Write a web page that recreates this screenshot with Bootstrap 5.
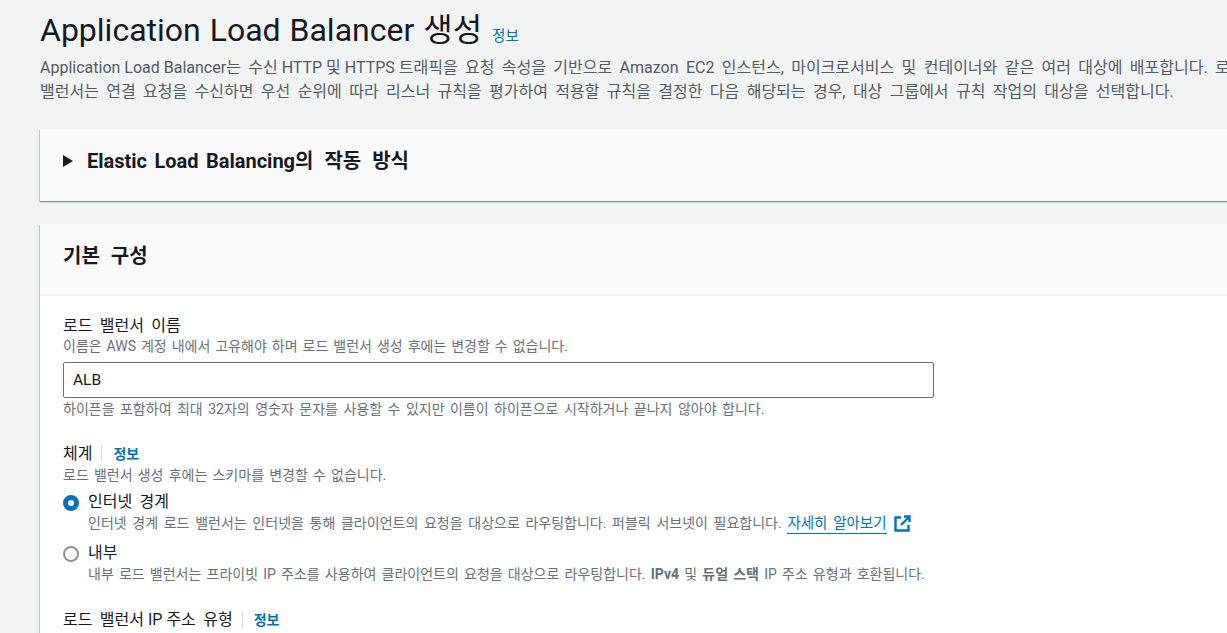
<!DOCTYPE html>
<html lang="ko">
<head>
  <meta charset="UTF-8">
  <meta name="viewport" content="width=device-width, initial-scale=1.0">
  <title>Application Load Balancer 생성</title>
  <link href="https://cdn.jsdelivr.net/npm/bootstrap@5.3.0/dist/css/bootstrap.min.css" rel="stylesheet">
  <style>
    html, body { height: 633px; overflow: hidden; }
    body {
      background: #f2f3f3;
      color: #16191f;
      font-family: Roboto, "Noto Sans CJK KR", sans-serif;
      font-size: 16px;
      line-height: 24px;
      word-spacing: 3.4px;
    }
    a { color: #0073bb; text-decoration: none; }
    .page-wrap { width: 1400px; padding: 12px 0 0 40px; }
    .page-title { font-size: 32px; line-height: 36px; font-weight: 400; margin: 0; word-spacing: 1px; }
    .title-info { font-size: 14.5px; font-weight: 400; margin-left: 1px; }
    .page-desc { color: #545b64; line-height: 24px; margin: 1px 0 0; }
    .plain-run { word-spacing: 0; }
    .heading-latin { word-spacing: 2.5px; }
    .aws-card { border: 0; border-radius: 0; box-shadow: 0 1px 1px 0 rgba(0,28,36,.3), 1px 1px 1px 0 rgba(0,28,36,.15), -1px 1px 1px 0 rgba(0,28,36,.15); }
    .aws-card .card-header { background: #fafafa; border-bottom: 0; border-radius: 0; padding: 0 23px 8px; }
    .help-card { margin-top: 25px; }
    .help-card .card-header { height: 72px; }
    .config-card { margin-top: 23px; }
    .config-card .card-header { height: 72px; border-bottom: 1px solid #eaeded; }
    .config-card .card-body { padding: 18px 23px; }
    .card-heading { font-size: 20px; font-weight: 700; line-height: 28px; margin: 0; word-spacing: 6px; }
    .caret-right { width: 0; height: 0; border-left: 10px solid #16191f; border-top: 6px solid transparent; border-bottom: 6px solid transparent; margin-right: 14px; }
    .field-label { line-height: 24px; }
    .field-hint { color: #687078; font-size: 14px; line-height: 20px; word-spacing: 1.7px; }
    .name-hint { margin-top: -2px; word-spacing: 1.5px; }
    .wide-hint { word-spacing: 2px; }
    .link-hint { word-spacing: 2.2px; }
    .info-sep { border-left: 1px solid #d5dbdb; margin-left: 9px; padding-left: 11px; font-size: 14px; font-weight: 700; word-spacing: 0; }
    .name-input { width: 871px; height: 36px; border: 1px solid #687078; border-radius: 2px; padding: 4px 9px; font-size: 15.5px; color: #16191f; margin: 6px 0 1px; }
    .scheme-block { margin-top: 23px; }
    .scheme-hint { margin-top: -1px; }
    .radio-row { display: flex; margin-top: 6px; }
    .radio-row + .radio-row { margin-top: 8px; }
    .radio-row .field-label { line-height: 22px; }
    .radio-row .form-check-input { width: 16px; height: 16px; margin: 4px 9px 0 0; flex: none; border: 2px solid #879596; background-color: #fff; }
    .radio-row .form-check-input:checked { background-color: #fff; border: 5px solid #0073bb; background-image: none; }
    .learn-more { border-bottom: 1px solid #0073bb; padding-bottom: 1px; font-size: 14.5px; }
    .ext-icon { width: 17px; height: 17px; margin-left: 2px; vertical-align: -4px; }
    .ip-block { margin-top: 24px; }
  </style>
</head>
<body>
<div class="page-wrap">
  <h1 class="page-title">Application Load Balancer 생성 <a class="title-info" href="#">정보</a></h1>
  <p class="page-desc"><span class="plain-run">Application Load Balancer</span>는 수신<span class="plain-run"> HTTP 및 HTTPS </span>트래픽을 요청 속성을 기반으로 Amazon EC2 인스턴스, 마이크로서비스 및 컨테이너와 같은 여러 대상에 배포합니다. 로드<br>밸런서는 연결 요청을 수신하면 우선 순위에 따라 리스너 규칙을 평가하여 적용할 규칙을 결정한 다음 해당되는 경우, 대상 그룹에서 규칙 작업의 대상을 선택합니다.</p>

  <div class="card aws-card help-card">
    <div class="card-header d-flex align-items-center">
      <span class="caret-right"></span>
      <h2 class="card-heading"><span class="heading-latin">Elastic Load Balancing</span>의 작동 방식</h2>
    </div>
  </div>

  <div class="card aws-card config-card">
    <div class="card-header d-flex align-items-center">
      <h2 class="card-heading">기본 구성</h2>
    </div>
    <div class="card-body">
      <label class="field-label d-block" for="lbName">로드 밸런서 이름</label>
      <div class="field-hint name-hint">이름은 AWS 계정 내에서 고유해야 하며 로드 밸런서 생성 후에는 변경할 수 없습니다.</div>
      <input class="form-control name-input" id="lbName" type="text" value="ALB">
      <div class="field-hint wide-hint">하이픈을 포함하여 최대 32자의 영숫자 문자를 사용할 수 있지만 이름이 하이픈으로 시작하거나 끝나지 않아야 합니다.</div>

      <div class="scheme-block">
        <div class="field-label">체계<a class="info-sep" href="#">정보</a></div>
        <div class="field-hint scheme-hint">로드 밸런서 생성 후에는 스키마를 변경할 수 없습니다.</div>
        <div class="radio-row">
          <input class="form-check-input" type="radio" name="scheme" id="schemeInternet" checked>
          <label for="schemeInternet">
            <span class="field-label d-block">인터넷 경계</span>
            <span class="field-hint link-hint d-block">인터넷 경계 로드 밸런서는 인터넷을 통해 클라이언트의 요청을 대상으로 라우팅합니다. 퍼블릭 서브넷이 필요합니다. <a class="learn-more" href="#">자세히 알아보기</a>
              <svg class="ext-icon" viewBox="0 0 17 17" fill="none" stroke="#0073bb" stroke-width="2.4"><path d="M7 2.5H1.5v13h13V10"/><path d="M10 1.5h5.5V7"/><path d="M15.5 1.5 7 10"/></svg></span>
          </label>
        </div>
        <div class="radio-row">
          <input class="form-check-input" type="radio" name="scheme" id="schemeInternal">
          <label for="schemeInternal">
            <span class="field-label d-block">내부</span>
            <span class="field-hint d-block">내부 로드 밸런서는 프라이빗 IP 주소를 사용하여 클라이언트의 요청을 대상으로 라우팅합니다. <b>IPv4</b> 및 <b>듀얼 스택</b> IP 주소 유형과 호환됩니다.</span>
          </label>
        </div>
      </div>

      <div class="ip-block">
        <div class="field-label">로드 밸런서<span class="plain-run"> IP </span>주소 유형<a class="info-sep" href="#">정보</a></div>
      </div>
    </div>
  </div>
</div>
<script src="https://cdn.jsdelivr.net/npm/bootstrap@5.3.0/dist/js/bootstrap.bundle.min.js"></script>
</body>
</html>
